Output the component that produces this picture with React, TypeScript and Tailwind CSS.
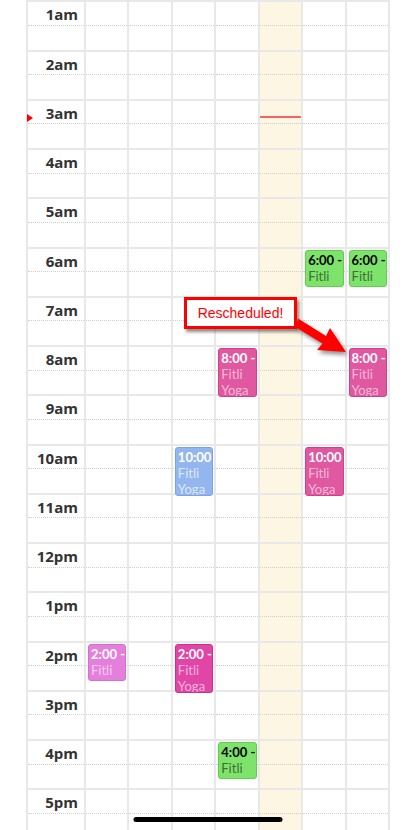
import React from 'react';

type Ev = {
  day: number;
  hour: number;
  long: boolean;
  time: string;
  lines: string[];
  box: string;
  sub: string;
  head: string;
};

const green = {
  box: 'bg-[#7de36a] border-[#5fcf4c]',
  head: 'text-black',
  sub: 'text-[#3f6e36]',
};
const pink = {
  box: 'bg-[#e0589f] border-[#d0408c]',
  head: 'text-white',
  sub: 'text-[#f7b8d8]',
};
const hotPink = {
  box: 'bg-[#e146a6] border-[#cd2f90]',
  head: 'text-white',
  sub: 'text-[#f7b4dc]',
};
const blue = {
  box: 'bg-[#94b6ee] border-[#7ea2e6]',
  head: 'text-white',
  sub: 'text-[#dce7fb]',
};
const orchid = {
  box: 'bg-[#e480dc] border-[#d86ccf]',
  head: 'text-white',
  sub: 'text-[#f6c9f2]',
};

const events: Ev[] = [
  { day: 5, hour: 6, long: false, time: '6:00 -', lines: ['Fitli'], ...green },
  { day: 6, hour: 6, long: false, time: '6:00 -', lines: ['Fitli'], ...green },
  { day: 3, hour: 8, long: true, time: '8:00 -', lines: ['Fitli', 'Yoga'], ...pink },
  { day: 6, hour: 8, long: true, time: '8:00 -', lines: ['Fitli', 'Yoga'], ...pink },
  { day: 2, hour: 10, long: true, time: '10:00', lines: ['Fitli', 'Yoga'], ...blue },
  { day: 5, hour: 10, long: true, time: '10:00', lines: ['Fitli', 'Yoga'], ...pink },
  { day: 0, hour: 14, long: false, time: '2:00 -', lines: ['Fitli'], ...orchid },
  { day: 2, hour: 14, long: true, time: '2:00 -', lines: ['Fitli', 'Yoga'], ...hotPink },
  { day: 3, hour: 16, long: false, time: '4:00 -', lines: ['Fitli'], ...green },
];

const hourLabel = (h: number) => {
  // the 12am row is scrolled out of view, its label stays blank
  if (h === 0) return '';
  const n = h % 12 === 0 ? 12 : h % 12;
  return `${n}${h < 12 ? 'am' : 'pm'}`;
};

const TODAY = 4;
const NOW_HOUR = 3;

const EventBox: React.FC<{ ev: Ev }> = ({ ev }) => (
  <div
    className={`absolute left-[2px] right-[1px] top-[1px] z-10 overflow-hidden whitespace-nowrap rounded-[3px] border px-[2px] pt-[1px] font-['Lato',sans-serif] text-[13px] leading-[16px] ${ev.box} ${
      ev.long ? 'h-[49px]' : 'h-[37px]'
    }`}>
    <div className={`font-bold ${ev.head}`}>{ev.time}</div>
    {ev.lines.map((l, i) => (
      <div key={i} className={ev.sub}>
        {l}
      </div>
    ))}
  </div>
);

const HourRow: React.FC<{ hour: number }> = ({ hour }) => (
  <div className="grid h-[49.25px] grid-cols-[56px_repeat(7,1fr)] border-t-2 border-[#e8e8e8]">
    <div className="flex flex-col">
      <div className="h-1/2 border-b border-dotted border-[#cfcfcf] pr-[6px] pt-[2px] text-right font-['Open_Sans',sans-serif] text-[15px] font-bold leading-[20px] text-[#333]">
        {hourLabel(hour)}
      </div>
    </div>
    {Array.from({ length: 7 }).map((_, d) => {
      const ev = events.find((e) => e.day === d && e.hour === hour);
      return (
        <div
          key={d}
          className={`relative flex flex-col border-l-2 border-[#e8e8e8] ${
            d === TODAY ? 'bg-[#fcf6e2]' : ''
          }`}>
          <div className="h-1/2 border-b border-dotted border-[#cfcfcf]" />
          {ev && <EventBox ev={ev} />}
          {d === TODAY && hour === NOW_HOUR && (
            <div className="absolute left-0 right-0 top-[15px] z-10 h-[2px] bg-[#f26560]" />
          )}
        </div>
      );
    })}
  </div>
);

export default function App() {
  const hours = Array.from({ length: 18 }).map((_, i) => i);
  return (
    <div className="relative h-[830px] w-[416px] overflow-hidden bg-white">
      <div className="ml-[26px] mt-[-49px] w-[364px] border-x-2 border-[#e8e8e8]">
        {hours.map((h) => (
          <HourRow key={h} hour={h} />
        ))}
      </div>

      {/* now marker */}
      <div className="absolute left-[27px] top-[114px] h-0 w-0 border-y-[4px] border-l-[6px] border-y-transparent border-l-[#f00]" />

      {/* callout */}
      <div className="absolute left-[184px] top-[297px] z-20 flex h-[32px] w-[113px] items-center justify-center border-[3px] border-[#f00] bg-white font-['Liberation_Sans',Arial,sans-serif] text-[14px] text-[#f00] shadow-[2px_3px_3px_rgba(0,0,0,0.45)]">
        Rescheduled!
      </div>
      <svg
        className="absolute left-0 top-0 z-20"
        width="416"
        height="830"
        viewBox="0 0 416 830"
        style={{ filter: 'drop-shadow(2px 3px 2px rgba(0,0,0,0.45))' }}>
        <polygon
          points="298,318.5 326,336 330,328 346,352 317,350 322.5,343.5 296,327.5"
          fill="#f00"
        />
      </svg>

      {/* home indicator */}
      <div className="absolute bottom-[8px] left-1/2 h-[5px] w-[149px] -translate-x-1/2 rounded-full bg-black" />
    </div>
  );
}
